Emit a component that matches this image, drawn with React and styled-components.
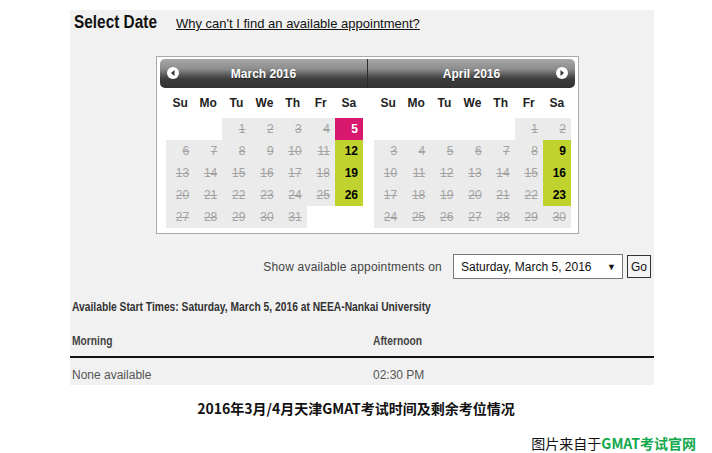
import React from 'react';
import styled, { createGlobalStyle } from 'styled-components';

const GlobalStyle = createGlobalStyle`
  html, body {
    margin: 0;
    padding: 0;
    background: #ffffff;
    font-family: 'Liberation Sans', Arial, sans-serif;
  }
`;

const Page = styled.div`
  width: 712px;
  height: 453px;
  padding-top: 10px;
  box-sizing: border-box;
  overflow: hidden;
`;

const Panel = styled.div`
  margin-left: 70px;
  width: 584px;
  height: 375px;
  background: #f1f1f1;
  display: flex;
  flex-direction: column;
`;

const TitleRow = styled.div`
  display: flex;
  align-items: baseline;
  padding: 1px 0 0 4px;
  height: 46px;
  box-sizing: border-box;
`;

// narrow bold heading, squeezed to match the condensed face
const Title = styled.h2`
  margin: 0 19px 0 0;
  width: 83px;
  white-space: nowrap;
  font-weight: 700;
  font-size: 19px;
  color: #111;
  transform: scaleX(0.81);
  transform-origin: left center;
`;

const HelpLink = styled.a`
  font-size: 13px;
  color: #111;
  text-decoration: underline;
  cursor: pointer;
`;

const CalendarBox = styled.div`
  margin-left: 86px;
  width: 423px;
  box-sizing: border-box;
  border: 1px solid #a9a9a9;
  background: #fff;
  padding: 2px 3px 5px 3px;
`;

const Months = styled.div`
  display: flex;
`;

const Month = styled.div`
  width: ${p => (p.$side === 'right' ? 208 : 207)}px;
`;

const MonthHeader = styled.div`
  position: relative;
  height: 29px;
  display: flex;
  align-items: center;
  justify-content: center;
  background: linear-gradient(#a8a8a8 0%, #8c8c8c 35%, #5a5a5a 55%, #3c3c3c 70%, #333 100%);
  border-radius: ${p => (p.$side === 'left' ? '5px 0 0 5px' : '0 5px 5px 0')};
  ${p => p.$side === 'right' && 'border-left: 1px solid #2b2b2b;'}
  color: #fff;
  font-weight: 700;
  font-size: 12px;
  text-shadow: 0 1px 1px rgba(0, 0, 0, 0.5);
`;

const NavButton = styled.span`
  position: absolute;
  top: 8px;
  ${p => (p.$side === 'left' ? 'left: 7px;' : 'right: 7px;')}
  width: 12px;
  height: 12px;
  display: flex;
`;

const DayGrid = styled.div`
  margin-left: ${p => (p.$side === 'right' ? 7 : 6)}px;
  width: 197px;
  display: grid;
  grid-template-columns: repeat(7, 1fr);
`;

const WeekdayCell = styled.div`
  height: 30px;
  display: flex;
  align-items: center;
  justify-content: center;
  font-weight: 700;
  font-size: 12px;
  color: #222;
`;

const DayCell = styled.div`
  height: 22px;
  display: flex;
  align-items: center;
  justify-content: flex-end;
  padding-right: 5px;
  font-size: 12px;
  background: ${p =>
    p.$kind === 'empty' ? 'transparent' : p.$kind === 'selected' ? '#d8186f' : p.$kind === 'open' ? '#bfd22e' : '#ebebeb'};
  color: ${p => (p.$kind === 'selected' ? '#fff' : p.$kind === 'open' ? '#000' : '#a3a3a3')};
  font-weight: ${p => (p.$kind === 'selected' || p.$kind === 'open' ? 700 : 400)};
  text-decoration: ${p => (p.$kind === 'past' ? 'line-through' : 'none')};
`;

const ShowRow = styled.div`
  margin-top: 20px;
  display: flex;
  justify-content: flex-end;
  align-items: center;
  padding-right: 3px;
  gap: 4px;
`;

const ShowLabel = styled.span`
  font-size: 12px;
  letter-spacing: 0.2px;
  color: #444;
  margin-right: 7px;
`;

const DateSelect = styled.div`
  width: 170px;
  height: 25px;
  box-sizing: border-box;
  border: 1px solid #777;
  background: #fff;
  display: flex;
  align-items: center;
  justify-content: space-between;
  padding: 0 6px 0 7px;
  font-size: 12px;
  color: #111;
`;

const Arrow = styled.span`
  font-size: 9px;
`;

const GoButton = styled.button`
  height: 23px;
  padding: 0 3px;
  border: 1px solid #333;
  background: #f3f3f3;
  font-family: 'Liberation Sans', Arial, sans-serif;
  font-size: 12px;
  color: #111;
`;

const Condensed = styled.span`
  display: inline-block;
  white-space: nowrap;
  transform: scaleX(0.79);
  transform-origin: left center;
`;

const StartTimes = styled.div`
  margin-top: 20px;
  padding-left: 2px;
  font-weight: 700;
  font-size: 13px;
  color: #333;
`;

const TimesTable = styled.div`
  margin-top: 19px;
  display: grid;
  grid-template-columns: 301px 1fr;
`;

const HeadCell = styled.div`
  padding: 0 0 8px 2px;
  border-bottom: 2px solid #111;
  font-weight: 700;
  font-size: 13px;
  color: #444;
`;

const BodyCell = styled.div`
  padding: 10px 0 0 2px;
  font-size: 12px;
  color: #555;
`;

const Caption = styled.div`
  margin-top: 13px;
  text-align: center;
  font-family: 'Noto Sans CJK SC', serif;
  font-weight: 700;
  font-size: 14px;
  color: #111;
`;

const Credit = styled.div`
  margin-top: 15px;
  padding-right: 16px;
  text-align: right;
  font-family: 'Noto Sans CJK SC', sans-serif;
  font-size: 14px;
  color: #111;
`;

const CreditBrand = styled.span`
  color: #12a84c;
  font-weight: 700;
`;

const Circle = ({ dir }) => (
  <svg width="12" height="12" viewBox="0 0 12 12">
    <circle cx="6" cy="6" r="6" fill="#fff" />
    {dir === 'left' ? <path d="M7.5 3 L4 6 L7.5 9 Z" fill="#333" /> : <path d="M4.5 3 L8 6 L4.5 9 Z" fill="#333" />}
  </svg>
);

const WEEKDAYS = ['Su', 'Mo', 'Tu', 'We', 'Th', 'Fr', 'Sa'];

const buildDays = (offset, count, open, selected) => {
  const cells = [];
  for (let i = 0; i < offset; i += 1) cells.push({ key: `e${i}`, kind: 'empty', label: '' });
  for (let d = 1; d <= count; d += 1) {
    let kind = 'past';
    if (d === selected) kind = 'selected';
    else if (open.includes(d)) kind = 'open';
    cells.push({ key: `d${d}`, kind, label: d });
  }
  return cells;
};

const MONTHS = [
  { name: 'March 2016', side: 'left', days: buildDays(2, 31, [12, 19, 26], 5) },
  { name: 'April 2016', side: 'right', days: buildDays(5, 30, [9, 16, 23], null) },
];

const App = () => (
  <Page>
    <GlobalStyle />
    <Panel>
      <TitleRow>
        <Title>Select Date</Title>
        <HelpLink>Why can't I find an available appointment?</HelpLink>
      </TitleRow>

      <CalendarBox>
        <Months>
          {MONTHS.map(m => (
            <Month key={m.name} $side={m.side}>
              <MonthHeader $side={m.side}>
                <NavButton $side={m.side}>
                  <Circle dir={m.side} />
                </NavButton>
                {m.name}
              </MonthHeader>
              <DayGrid $side={m.side}>
                {WEEKDAYS.map(w => (
                  <WeekdayCell key={w}>{w}</WeekdayCell>
                ))}
                {m.days.map(c => (
                  <DayCell key={c.key} $kind={c.kind}>
                    {c.label}
                  </DayCell>
                ))}
              </DayGrid>
            </Month>
          ))}
        </Months>
      </CalendarBox>

      <ShowRow>
        <ShowLabel>Show available appointments on</ShowLabel>
        <DateSelect>
          Saturday, March 5, 2016
          <Arrow>▼</Arrow>
        </DateSelect>
        <GoButton>Go</GoButton>
      </ShowRow>

      <StartTimes>
        <Condensed>Available Start Times: Saturday, March 5, 2016 at NEEA-Nankai University</Condensed>
      </StartTimes>

      <TimesTable>
        <HeadCell>
          <Condensed>Morning</Condensed>
        </HeadCell>
        <HeadCell>
          <Condensed>Afternoon</Condensed>
        </HeadCell>
        <BodyCell>None available</BodyCell>
        <BodyCell>02:30 PM</BodyCell>
      </TimesTable>
    </Panel>

    <Caption>2016年3月/4月天津GMAT考试时间及剩余考位情况</Caption>
    <Credit>
      图片来自于<CreditBrand>GMAT考试官网</CreditBrand>
    </Credit>
  </Page>
);

export default App;
